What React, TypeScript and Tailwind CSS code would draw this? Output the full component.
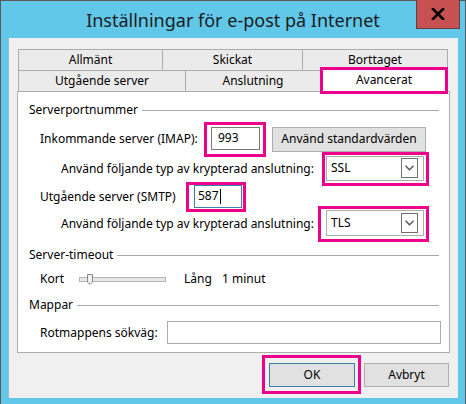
import React from "react";

const FONT = { fontFamily: '"Noto Sans", "Open Sans", Arial, sans-serif' };

function GroupHeader({ label }: { label: string }) {
  return (
    <div className="flex h-[18px] items-center pl-[11px] pr-[10px]">
      <span className="whitespace-nowrap text-[12px] text-black">{label}</span>
      <div className="ml-[4px] h-px flex-1 bg-[#a8a8a8]" />
    </div>
  );
}

function Chevron() {
  return (
    <svg width="9" height="6" viewBox="0 0 9 6">
      <path d="M0.5 0.8 L4.5 4.8 L8.5 0.8" fill="none" stroke="#555" strokeWidth="1.4" />
    </svg>
  );
}

function Select({ value, tall }: { value: string; tall?: boolean }) {
  return (
    <div
      className={`flex w-[98px] items-center justify-between border border-[#acacac] bg-white pl-[4px] pr-[5px] ${
        tall ? "h-[26px]" : "h-[25px]"
      }`}
    >
      <span className="text-[12px] text-black">{value}</span>
      <div className="flex h-[20px] w-[17px] items-center justify-center border border-[#707070] bg-white">
        <Chevron />
      </div>
    </div>
  );
}

export default function App() {
  return (
    <div
      className="relative flex h-[404px] w-[466px] flex-col border-l border-t border-r border-[#5a5a5a] bg-[#62c8ea]"
      style={FONT}
    >
      {/* title bar */}
      <div className="relative flex h-[37px] items-center justify-center pt-[2px]">
        <span className="text-[18px] text-[#1c1c1c]">Inställningar för e-post på Internet</span>
        <div className="absolute right-[5px] top-[-1px] flex h-[29px] w-[44px] items-center justify-center border border-t-0 border-[#5a4040] bg-[#c75050]">
          <svg width="14" height="12" viewBox="0 0 14 12">
            <path d="M2 1 L12 11 M12 1 L2 11" stroke="#000" strokeWidth="2.6" strokeLinecap="square" />
          </svg>
        </div>
      </div>

      {/* dialog body */}
      <div className="ml-[7px] flex h-[360px] w-[450px] flex-col border-l border-[#9fb9c6] bg-[#f0f0f0] pt-[11px]">
        {/* tabs */}
        <div className="ml-[9px] flex w-[430px] flex-col">
          <div className="flex h-[21px]">
            <div className="flex w-[144px] items-center justify-center border-l border-t border-[#acacac] bg-[#ebebeb] text-[12px]">
              Allmänt
            </div>
            <div className="flex w-[140px] items-center justify-center border-l border-t border-[#acacac] bg-[#ebebeb] text-[12px]">
              Skickat
            </div>
            <div className="flex w-[146px] items-center justify-center border-l border-r border-t border-[#acacac] bg-[#ebebeb] text-[12px]">
              Borttaget
            </div>
          </div>
          <div className="flex h-[21px] items-start">
            <div className="flex h-[21px] w-[167px] items-center justify-center border-l border-t border-[#acacac] bg-[#ebebeb] text-[12px]">
              Utgående server
            </div>
            <div className="flex h-[21px] w-[135px] items-center justify-center border-l border-t border-[#acacac] bg-[#ebebeb] text-[12px]">
              Anslutning
            </div>
            <div className="relative z-10 -mt-[3px] flex h-[27px] w-[128px] items-start justify-center border-[3px] border-[#ec008c] bg-white pt-[1px] text-[12px]">
              Avancerat
            </div>
          </div>
        </div>

        {/* tab page */}
        <div className="ml-[8px] flex h-[262px] w-[433px] flex-col border border-[#acacac] bg-white pt-[9px] text-[12px] text-black">
          <GroupHeader label="Serverportnummer" />

          <div className="mt-[5px] flex h-[30px] items-center pl-[22px]">
            <span className="w-[164px] whitespace-nowrap">Inkommande server (IMAP):</span>
            <div className="border-[3px] border-[#ec008c] pb-[4px] pl-[4px] pr-[3px] pt-[2px]">
              <div className="flex h-[23px] w-[49px] items-center border border-[#7a7a7a] bg-white pl-[6px]">993</div>
            </div>
            <div className="ml-[6px] flex h-[25px] w-[154px] items-center justify-center border border-[#adadad] bg-[#e1e1e1]">
              Använd standardvärden
            </div>
          </div>

          <div className="flex h-[29px] items-center pl-[43px]">
            <span className="w-[261px] whitespace-nowrap">Använd följande typ av krypterad anslutning:</span>
            <div className="border-[3px] border-[#ec008c] pb-[2px] pl-[1px] pr-[2px] pt-[1px]">
              <Select value="SSL" />
            </div>
          </div>

          <div className="flex h-[27px] items-center pl-[22px]">
            <span className="w-[146px] whitespace-nowrap">Utgående server (SMTP)</span>
            <div className="border-[3px] border-[#ec008c] pb-[1px] pl-[5px] pr-[1px]">
              <div className="flex h-[23px] w-[48px] items-center border border-[#3c7fb1] bg-white pl-[3px]">
                587
                <span className="ml-px h-[15px] w-px bg-black" />
              </div>
            </div>
          </div>

          <div className="flex h-[28px] items-center pl-[43px]">
            <span className="w-[257px] whitespace-nowrap">Använd följande typ av krypterad anslutning:</span>
            <div className="border-[3px] border-[#ec008c] pb-[3px] pl-[5px] pr-[2px] pt-[1px]">
              <Select value="TLS" tall />
            </div>
          </div>

          <div className="mt-[8px]">
            <GroupHeader label="Server-timeout" />
          </div>

          <div className="mt-[4px] flex h-[22px] items-center pl-[22px]">
            <span className="w-[39px]">Kort</span>
            <div className="relative flex h-[11px] w-[87px] items-center">
              <div className="h-[5px] w-full border border-[#b5b5b5] bg-[#e7e7e7]" />
              <svg className="absolute left-[8px] top-0" width="6" height="11" viewBox="0 0 6 11">
                <path d="M0.5 0.5 H5.5 V8 L3 10.5 L0.5 8 Z" fill="#f0f0f0" stroke="#8a8a8a" />
              </svg>
            </div>
            <span className="ml-[18px] w-[38px]">Lång</span>
            <span>1 minut</span>
          </div>

          <div className="mt-[6px]">
            <GroupHeader label="Mappar" />
          </div>

          <div className="mt-[6px] flex h-[25px] items-center pl-[22px]">
            <span className="w-[127px] whitespace-nowrap">Rotmappens sökväg:</span>
            <div className="h-[23px] w-[274px] border border-[#acacac] bg-white" />
          </div>
        </div>

        {/* dialog buttons */}
        <div className="mt-[2px] flex items-start justify-end pr-[9px] text-[12px] text-black">
          <div className="border-[3px] border-[#ec008c] pb-[4px] pl-[4px] pr-[3px] pt-[5px]">
            <div className="flex h-[24px] w-[86px] items-center justify-center border border-[#3c7fb1] bg-[#e1e1e1]">OK</div>
          </div>
          <div className="ml-[3px] mt-[8px] flex h-[24px] w-[85px] items-center justify-center border border-[#adadad] bg-[#e1e1e1]">
            Avbryt
          </div>
        </div>
      </div>
    </div>
  );
}
